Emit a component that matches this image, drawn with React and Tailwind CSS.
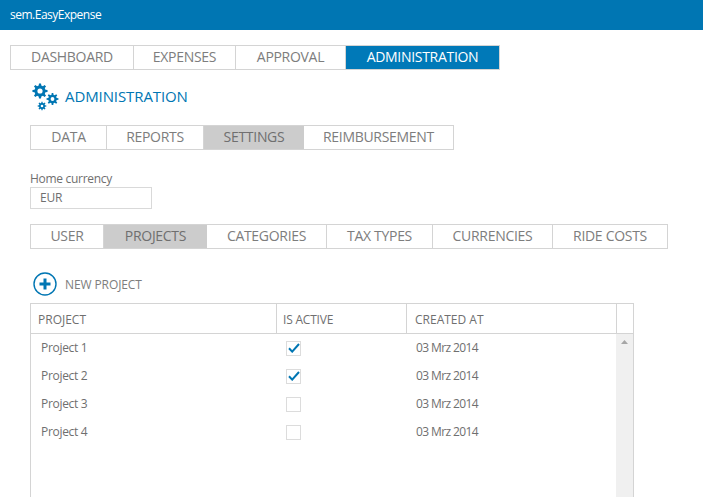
const font = { fontFamily: '"Open Sans", "Noto Sans", sans-serif' };

function gearPath(cx, cy, R, r, hole, teeth) {
  let d = "";
  const step = (Math.PI * 2) / teeth;
  for (let i = 0; i < teeth; i++) {
    const a = i * step;
    const pts = [
      [r, a - step * 0.3],
      [R, a - step * 0.17],
      [R, a + step * 0.17],
      [r, a + step * 0.3],
    ];
    pts.forEach(([rad, t], j) => {
      const x = (cx + rad * Math.cos(t)).toFixed(2);
      const y = (cy + rad * Math.sin(t)).toFixed(2);
      d += (i === 0 && j === 0 ? "M" : "L") + x + " " + y + " ";
    });
  }
  d += "Z ";
  d += `M${cx + hole} ${cy} A${hole} ${hole} 0 1 0 ${cx - hole} ${cy} A${hole} ${hole} 0 1 0 ${cx + hole} ${cy} Z`;
  return d;
}

function Gears() {
  return (
    <svg width="28" height="28" viewBox="0 0 28 28" className="shrink-0">
      <path fillRule="evenodd" fill="#0076b3" d={gearPath(8, 8, 7.6, 5.6, 2.6, 8)} />
      <path fillRule="evenodd" fill="#0076b3" d={gearPath(20.5, 16, 6, 4.3, 1.9, 8)} />
      <path fillRule="evenodd" fill="#0076b3" d={gearPath(10, 23, 4.4, 3.1, 1.3, 8)} />
    </svg>
  );
}

function PlusCircle() {
  return (
    <svg width="24" height="24" viewBox="0 0 24 24" className="shrink-0">
      <circle cx="12" cy="12" r="11" fill="none" stroke="#0076b3" strokeWidth="1.4" />
      <path d="M12 6.5v11M6.5 12h11" stroke="#0076b3" strokeWidth="3" fill="none" />
    </svg>
  );
}

function Check() {
  return (
    <svg width="12" height="10" viewBox="0 0 12 10">
      <path d="M1 5.2 L4.2 8.6 L11 1" fill="none" stroke="#0076b3" strokeWidth="2" />
    </svg>
  );
}

function Tabs({ items, className }) {
  return (
    <div className={"flex box-border border border-[#d4d4d4] " + className}>
      {items.map((t) => (
        <div
          key={t.label}
          style={{ width: t.w }}
          className={
            "flex items-center justify-center pb-[2px] border-r last:border-r-0 border-[#d4d4d4] text-[14px] tracking-[-0.3px] whitespace-nowrap " +
            (t.active === "blue"
              ? "bg-[#0079b8] text-white"
              : t.active === "grey"
              ? "bg-[#cccccc] text-[#6f6f6f] border-r-0"
              : "text-[#7d7d7d]")
          }
        >
          {t.label}
        </div>
      ))}
    </div>
  );
}

const rows = [
  ["Project 1", true],
  ["Project 2", true],
  ["Project 3", false],
  ["Project 4", false],
];

export default function App() {
  return (
    <div style={font} className="h-[497px] w-[703px] overflow-hidden bg-white">
      <header className="h-[30px] bg-[#0076b3] flex items-center pl-[10px] text-[12px] tracking-[-0.5px] text-white">
        sem.EasyExpense
      </header>

      <div className="pl-[10px] pt-[15px]">
        <Tabs
          className="w-[490px] h-[25px]"
          items={[
            { label: "DASHBOARD", w: 123 },
            { label: "EXPENSES", w: 102 },
            { label: "APPROVAL", w: 110 },
            { label: "ADMINISTRATION", w: 153, active: "blue" },
          ]}
        />
      </div>

      <div className="pl-[32px] pt-[9px] flex items-center gap-[5px] h-[44px]">
        <Gears />
        <h1 className="text-[15px] tracking-[-0.1px] text-[#0076b3] font-normal">ADMINISTRATION</h1>
      </div>

      <div className="pl-[30px] pt-[11px]">
        <Tabs
          className="w-[424px] h-[25px]"
          items={[
            { label: "DATA", w: 76 },
            { label: "REPORTS", w: 97 },
            { label: "SETTINGS", w: 100, active: "grey" },
            { label: "REIMBURSEMENT", w: 149 },
          ]}
        />

        <div className="text-[12px] leading-[15px] tracking-[-0.3px] text-[#6f6f6f] mt-[21px] pb-px">Home currency</div>
        <div className="w-[122px] h-[22px] border border-[#d9d9d9] flex items-center pl-[9px] text-[12px] tracking-[-0.2px] text-[#6f6f6f]">
          EUR
        </div>

        <Tabs
          className="w-[638px] h-[25px] mt-[15px]"
          items={[
            { label: "USER", w: 73 },
            { label: "PROJECTS", w: 103, active: "grey" },
            { label: "CATEGORIES", w: 120 },
            { label: "TAX TYPES", w: 106 },
            { label: "CURRENCIES", w: 120 },
            { label: "RIDE COSTS", w: 114 },
          ]}
        />

        <div className="flex items-center gap-2 pl-[3px] mt-[23px] h-6">
          <PlusCircle />
          <span className="text-[12px] tracking-[-0.1px] text-[#7d7d7d] pt-px">NEW PROJECT</span>
        </div>

        <div className="w-[604px] mt-[7px] border border-[#d4d4d4] border-b-0 h-[200px] flex flex-col">
          <div className="flex h-[30px] shrink-0 border-b border-[#d4d4d4] text-[12px] text-[#6f6f6f]">
            <div className="w-[246px] border-r border-[#d4d4d4] flex items-center pl-[7px] pt-[2px]">PROJECT</div>
            <div className="w-[130px] border-r border-[#d4d4d4] flex items-center pl-[6px] pt-[2px] tracking-[-0.2px]">IS ACTIVE</div>
            <div className="w-[210px] border-r border-[#d4d4d4] flex items-center pl-[8px] pt-[2px]">CREATED AT</div>
            <div className="flex-1" />
          </div>
          <div className="flex flex-1 min-h-0">
            <div className="w-[585px]">
              {rows.map(([name, active]) => (
                <div key={name} className="flex h-[28px] items-center text-[12px] text-[#6f6f6f]">
                  <div className="w-[246px] pl-[10px] tracking-[-0.3px]">{name}</div>
                  <div className="w-[130px] pl-[9px] flex items-center">
                    <span className="w-[15px] h-[15px] border border-[#dcdcdc] flex items-center justify-center">
                      {active && <Check />}
                    </span>
                  </div>
                  <div className="pl-[9px] tracking-[-0.6px]">03 Mrz 2014</div>
                </div>
              ))}
            </div>
            <div className="flex-1 bg-[#f0f0f0] flex justify-center pt-[6px]">
              <svg width="7" height="4" viewBox="0 0 7 4">
                <path d="M0 4 L3.5 0 L7 4 Z" fill="#a6a6a6" />
              </svg>
            </div>
          </div>
        </div>
      </div>
    </div>
  );
}
